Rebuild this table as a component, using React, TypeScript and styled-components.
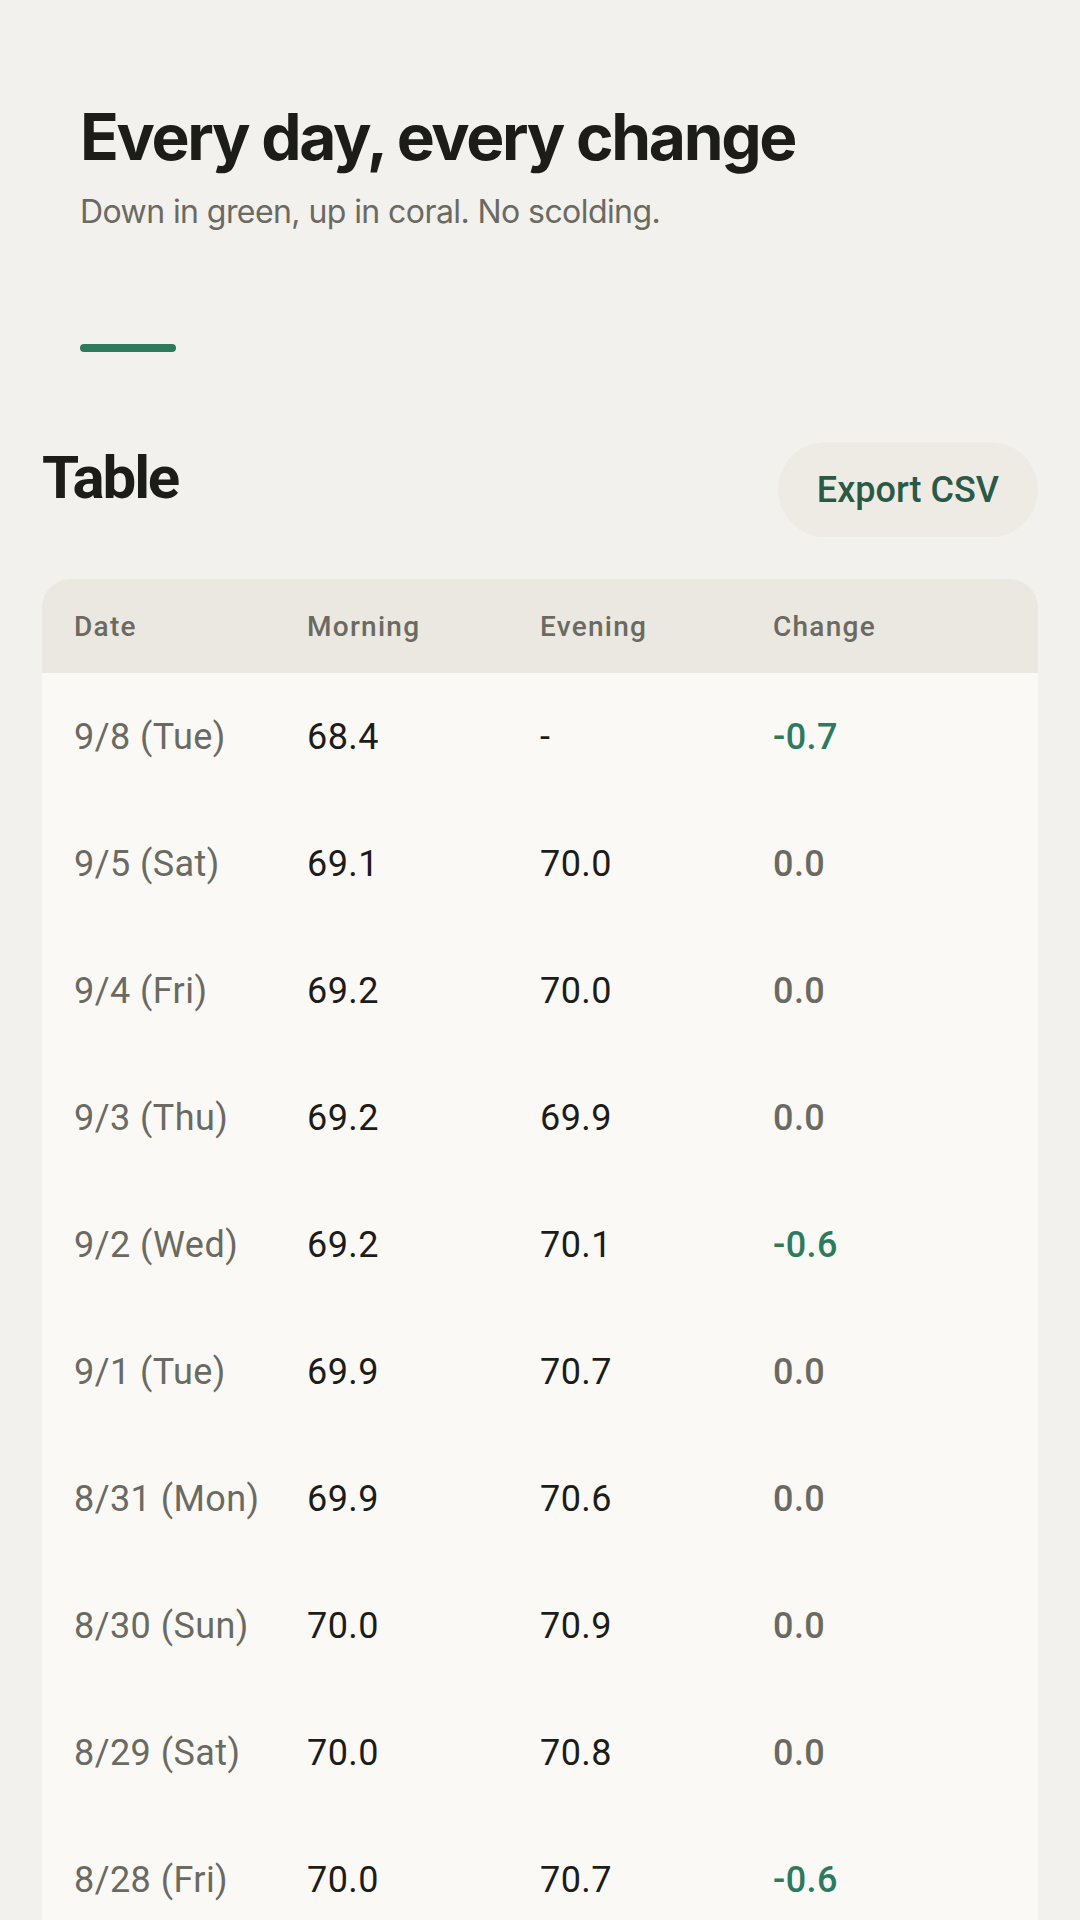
import React from "react";
import styled, { createGlobalStyle } from "styled-components";

const GlobalStyle = createGlobalStyle`
  html, body {
    margin: 0;
    padding: 0;
    background: #f2f1ed;
  }
  body {
    font-family: Roboto, "Liberation Sans", sans-serif;
    -webkit-font-smoothing: antialiased;
  }
  * { box-sizing: border-box; }
`;

const Page = styled.main`
  min-height: 1920px;
  background: #f2f1ed;
  display: flex;
  flex-direction: column;
`;

const Hero = styled.header`
  padding: 102px 80px 0;
  display: flex;
  flex-direction: column;
`;

const Title = styled.h1`
  margin: 0;
  font-family: Inter, "Noto Sans", sans-serif;
  font-weight: 700;
  font-size: 64px;
  line-height: 1.1;
  letter-spacing: -0.036em;
  color: #1c1c18;
`;

const Subtitle = styled.p`
  margin: 18px 0 0;
  font-family: Inter, "Noto Sans", sans-serif;
  font-weight: 400;
  font-size: 32px;
  line-height: 1.4;
  letter-spacing: -0.018em;
  color: #6b6a62;
`;

const Accent = styled.div`
  margin-top: 109px;
  width: 96px;
  height: 8px;
  border-radius: 4px;
  background: #2d7a5e;
`;

const Section = styled.section`
  padding: 90px 42px 0;
  display: flex;
  flex-direction: column;
  gap: 42px;
`;

const SectionHead = styled.div`
  display: flex;
  justify-content: space-between;
  align-items: flex-start;
`;

const SectionTitle = styled.h2`
  margin: 0;
  font-family: Roboto, "Liberation Sans", sans-serif;
  font-weight: 700;
  font-size: 60px;
  line-height: 1.2;
  letter-spacing: -0.036em;
  color: #1c1c18;
`;

const ExportButton = styled.button`
  height: 95px;
  padding: 0 39px;
  border: none;
  border-radius: 48px;
  background: #eeebe5;
  color: #2a5a45;
  font-family: Roboto, "Liberation Sans", sans-serif;
  font-weight: 500;
  font-size: 36px;
  cursor: pointer;
`;

const Card = styled.div`
  background: #faf9f6;
  border-radius: 28px;
  overflow: hidden;
`;

const HeadRow = styled.div`
  display: grid;
  grid-template-columns: repeat(4, 1fr);
  align-items: center;
  height: 94px;
  padding: 0 32px;
  background: #ebe8e1;
`;

const HeadCell = styled.div`
  font-family: Roboto, "Liberation Sans", sans-serif;
  font-weight: 500;
  font-size: 28px;
  letter-spacing: 0.045em;
  color: #6b6a62;
`;

const Row = styled.div`
  display: grid;
  grid-template-columns: repeat(4, 1fr);
  align-items: center;
  height: 127px;
  padding: 0 32px;
`;

type Tone = "muted" | "strong" | "down" | "flat";

const toneColor: Record<Tone, string> = {
  muted: "#6b6a62",
  strong: "#1c1c18",
  down: "#2d7a5e",
  flat: "#6b6a62",
};

const Cell = styled.div<{ $tone: Tone }>`
  font-family: Roboto, "Liberation Sans", sans-serif;
  font-size: 36px;
  letter-spacing: 0.012em;
  font-weight: ${(p) => (p.$tone === "down" || p.$tone === "flat" ? 500 : 400)};
  color: ${(p) => toneColor[p.$tone]};
`;

const rows = [
  ["9/8 (Tue)", "68.4", "-", "-0.7"],
  ["9/5 (Sat)", "69.1", "70.0", "0.0"],
  ["9/4 (Fri)", "69.2", "70.0", "0.0"],
  ["9/3 (Thu)", "69.2", "69.9", "0.0"],
  ["9/2 (Wed)", "69.2", "70.1", "-0.6"],
  ["9/1 (Tue)", "69.9", "70.7", "0.0"],
  ["8/31 (Mon)", "69.9", "70.6", "0.0"],
  ["8/30 (Sun)", "70.0", "70.9", "0.0"],
  ["8/29 (Sat)", "70.0", "70.8", "0.0"],
  ["8/28 (Fri)", "70.0", "70.7", "-0.6"],
];

export default function App() {
  return (
    <>
      <GlobalStyle />
      <Page>
        <Hero>
          <Title>Every day, every change</Title>
          <Subtitle>Down in green, up in coral. No scolding.</Subtitle>
          <Accent />
        </Hero>
        <Section>
          <SectionHead>
            <SectionTitle>Table</SectionTitle>
            <ExportButton>Export CSV</ExportButton>
          </SectionHead>
          <Card>
            <HeadRow>
              <HeadCell>Date</HeadCell>
              <HeadCell>Morning</HeadCell>
              <HeadCell>Evening</HeadCell>
              <HeadCell>Change</HeadCell>
            </HeadRow>
            {rows.map(([d, m, e, c]) => (
              <Row key={d}>
                <Cell $tone="muted">{d}</Cell>
                <Cell $tone="strong">{m}</Cell>
                <Cell $tone="strong">{e}</Cell>
                <Cell $tone={c.startsWith("-") ? "down" : "flat"}>{c}</Cell>
              </Row>
            ))}
          </Card>
        </Section>
      </Page>
    </>
  );
}
